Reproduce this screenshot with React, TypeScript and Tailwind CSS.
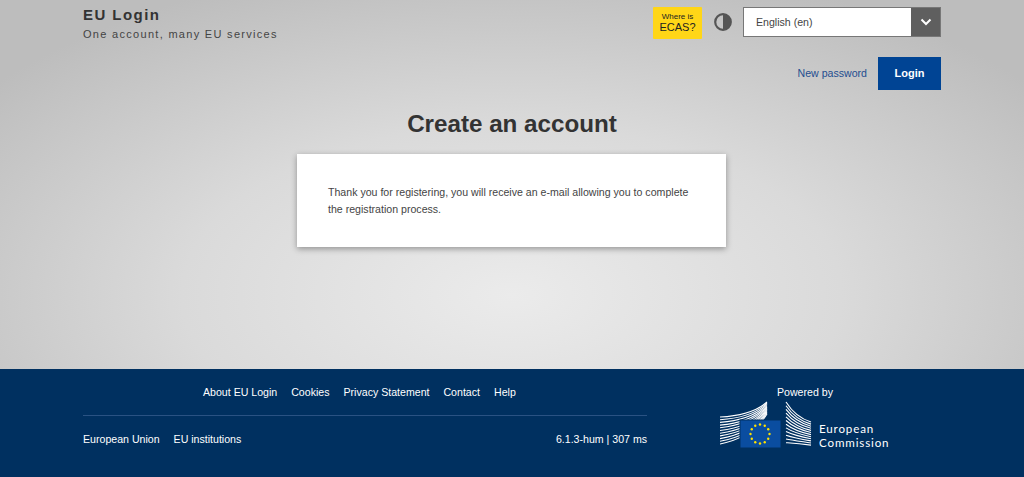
const FONT = "font-['Liberation_Sans',Arial,sans-serif]";

const TOP_LINKS = ["About EU Login", "Cookies", "Privacy Statement", "Contact", "Help"];

function CommissionLogo() {
  const stars = Array.from({ length: 12 }, (_, i) => {
    const a = (i * Math.PI) / 6;
    return { x: 40 + 9.5 * Math.sin(a), y: 33 + 9.5 * Math.cos(a) };
  });
  const leftLines = Array.from({ length: 11 }, (_, i) => i);
  const rightLines = Array.from({ length: 12 }, (_, i) => i);
  return (
    <div className="flex">
      <svg width="92" height="48" viewBox="0 0 92 48" className="block">
        {/* left wing, lines run behind the flag */}
        {leftLines.map((i) => (
          <path
            key={i}
            d={`M0 ${16 + i * 2.7} C 20 ${15 + i * 2.4}, 36 ${11 + i * 2}, 47 ${1 + i * 1.2}`}
            fill="none"
            stroke="#fff"
            strokeWidth="1.1"
          />
        ))}
        {/* flag */}
        <rect x="20" y="19" width="41" height="28" fill="#0a4da0" stroke="#003060" strokeWidth="1" />
        {stars.map((s, i) => (
          <circle key={i} cx={s.x} cy={s.y} r="1.2" fill="#ffe100" />
        ))}
        {/* right wing */}
        {rightLines.map((i) => (
          <path
            key={i}
            d={`M66 ${1 + i * 3.7} C 71 ${9 + i * 3}, 78 ${17 + i * 2.3}, 91 ${21 + i * 2.1}`}
            fill="none"
            stroke="#fff"
            strokeWidth="1.1"
          />
        ))}
      </svg>
      <div className="ml-[7px] pt-[21px] font-['Lato',sans-serif] text-[11.6px] leading-[14px] tracking-[0.85px]">
        <div>European</div>
        <div>Commission</div>
      </div>
    </div>
  );
}

export default function App() {
  return (
    <div className={`${FONT} h-[477px] overflow-hidden flex flex-col`}>
      <main className="h-[369px] bg-[radial-gradient(ellipse_660px_340px_at_512px_295px,#ebebeb_0%,#dadada_50%,#bdbdbd_100%)]">
        <div className="ml-[83px] w-[858px]">
          <header className="flex justify-between">
            <div className="pt-[6px]">
              <div className="text-[15px] leading-[17px] font-bold tracking-[1.45px] text-[#333]">EU Login</div>
              <div className="mt-[3px] text-[11px] leading-[16px] tracking-[1.3px] text-[#444]">
                One account, many EU services
              </div>
            </div>
            <div className="pt-[7px] flex items-start">
              <div className="w-[49px] h-[32px] bg-[#ffd617] text-center text-[#222] rounded-[1px]">
                <div className="text-[8px] leading-[9px] pt-[5px]">Where is</div>
                <div className="text-[11px] leading-[13px]">ECAS?</div>
              </div>
              <svg width="18" height="18" viewBox="0 0 18 18" className="ml-[12px] mt-[6px]">
                <circle cx="9" cy="9" r="7.8" fill="none" stroke="#555" strokeWidth="2.2" />
                <path d="M9 1.2 A7.8 7.8 0 0 1 9 16.8 Z" fill="#555" />
              </svg>
              <div className="ml-[11px] w-[198px] h-[30px] bg-white border border-[#777] flex">
                <div className="flex-1 pl-[12px] text-[10.6px] leading-[28px] text-[#444]">English (en)</div>
                <div className="w-[29px] bg-[#5f5f5f] flex items-center justify-center">
                  <svg width="12" height="8" viewBox="0 0 12 8">
                    <path d="M1.5 1.5 L6 6 L10.5 1.5" fill="none" stroke="#fff" strokeWidth="2" />
                  </svg>
                </div>
              </div>
            </div>
          </header>
          <div className="mt-[15px] flex justify-end items-center">
            <a className="text-[10.6px] text-[#1f4d8f]">New password</a>
            <a className="ml-[11px] w-[63px] h-[33px] bg-[#004494] text-white text-[11px] font-bold flex items-center justify-center">
              Login
            </a>
          </div>
        </div>
        <h1 className="mt-[18px] text-center text-[24.2px] leading-[32px] font-bold text-[#333]">Create an account</h1>
        <div className="mt-[14px] ml-[297px] w-[429px] h-[93px] bg-white shadow-[0_2px_6px_rgba(0,0,0,0.35)] pl-[31px] pr-[30px] pt-[30px] text-[10.6px] leading-[17px] text-[#444]">
          Thank you for registering, you will receive an e-mail allowing you to complete the registration process.
        </div>
      </main>
      <footer className="h-[108px] bg-[#003060] text-white text-[10.6px] flex">
        <div className="ml-[83px] w-[564px]">
          <div className="pt-[16px] pl-[120px] h-[47px] border-b border-[#2a5283] flex gap-[14px] leading-[14px]">
            {TOP_LINKS.map((l) => (
              <a key={l}>{l}</a>
            ))}
          </div>
          <div className="pt-[16px] flex justify-between leading-[14px]">
            <div className="flex gap-[14px]">
              <a>European Union</a>
              <a>EU institutions</a>
            </div>
            <span>6.1.3-hum | 307 ms</span>
          </div>
        </div>
        <div className="ml-[73px] pt-[16px]">
          <div className="w-[170px] text-center leading-[14px]">Powered by</div>
          <div className="mt-[2px]">
            <CommissionLogo />
          </div>
        </div>
      </footer>
    </div>
  );
}
